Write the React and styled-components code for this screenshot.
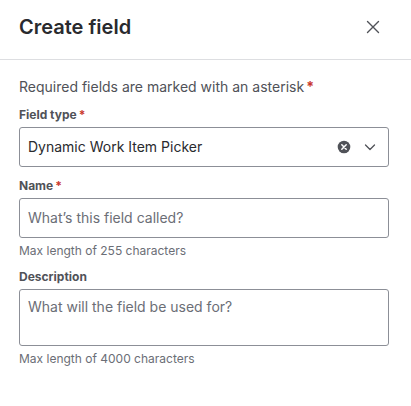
import React from 'react';
import styled, { createGlobalStyle } from 'styled-components';

const GlobalStyle = createGlobalStyle`
  html, body {
    margin: 0;
    padding: 0;
    background: #ffffff;
  }
  body {
    font-family: Inter, "Noto Sans", sans-serif;
    -webkit-font-smoothing: antialiased;
  }
  * {
    box-sizing: border-box;
  }
`;

const Modal = styled.div`
  width: 411px;
  height: 406px;
  background: #ffffff;
  display: flex;
  flex-direction: column;
`;

const Header = styled.header`
  display: flex;
  align-items: center;
  justify-content: space-between;
  height: 60px;
  padding: 0 26px 6px 19px;
  border-bottom: 1px solid #dddee1;
`;

const Title = styled.h1`
  margin: 0;
  font-size: 20px;
  line-height: 24px;
  font-weight: 600;
  color: #292a2e;
`;

const CloseButton = styled.button`
  display: flex;
  align-items: center;
  justify-content: center;
  width: 24px;
  height: 24px;
  padding: 0;
  border: 0;
  background: transparent;
  color: #505258;
  cursor: pointer;
`;

const Body = styled.div`
  padding: 17px 22px 0 19px;
  display: flex;
  flex-direction: column;
`;

const Intro = styled.p`
  margin: 0;
  font-size: 14px;
  line-height: 20px;
  color: #505258;
`;

const Asterisk = styled.span`
  color: #c9372c;
  font-weight: 700;
  margin-left: 2px;
`;

const Field = styled.div`
  display: flex;
  flex-direction: column;
  margin-top: ${(p) => p.$gap}px;
`;

const Label = styled.label`
  font-size: 12px;
  line-height: 16px;
  font-weight: 650;
  color: #505258;
  margin-bottom: 4px;
`;

const Box = styled.div`
  display: flex;
  align-items: ${(p) => (p.$multi ? 'flex-start' : 'center')};
  height: ${(p) => p.$height}px;
  padding: ${(p) => (p.$multi ? '7px 8px' : '0 8px')};
  border: 1px solid #8c8f97;
  border-radius: 3px;
  font-size: 14px;
  line-height: 20px;
`;

const Value = styled.span`
  flex: 1;
  color: #292a2e;
`;

const Placeholder = styled.span`
  flex: 1;
  color: #6b6e76;
`;

const Icons = styled.div`
  display: flex;
  align-items: center;
  gap: 12px;
  padding-right: 3px;
`;

const Help = styled.div`
  margin-top: 5px;
  font-size: 12px;
  line-height: 16px;
  color: #6b6e76;
`;

const CloseIcon = () => (
  <svg width="16" height="16" viewBox="0 0 16 16" fill="none">
    <path d="M2.5 2.5 L13.5 13.5 M13.5 2.5 L2.5 13.5" stroke="currentColor" strokeWidth="1.4" strokeLinecap="round" />
  </svg>
);

const ClearIcon = () => (
  <svg width="14" height="14" viewBox="0 0 14 14">
    <circle cx="7" cy="7" r="6.3" fill="#505258" />
    <path d="M4.8 4.8 L9.2 9.2 M9.2 4.8 L4.8 9.2" stroke="#ffffff" strokeWidth="1.5" strokeLinecap="round" />
  </svg>
);

const ChevronIcon = () => (
  <svg width="14" height="14" viewBox="0 0 14 14" fill="none">
    <path d="M2.5 5 L7 9.5 L11.5 5" stroke="#505258" strokeWidth="1.3" strokeLinecap="round" strokeLinejoin="round" />
  </svg>
);

export default function App() {
  return (
    <>
      <GlobalStyle />
      <Modal>
        <Header>
          <Title>Create field</Title>
          <CloseButton aria-label="Close">
            <CloseIcon />
          </CloseButton>
        </Header>
        <Body>
          <Intro>
            Required fields are marked with an asterisk<Asterisk>*</Asterisk>
          </Intro>

          <Field $gap={10}>
            <Label>
              Field type<Asterisk>*</Asterisk>
            </Label>
            <Box $height={40}>
              <Value>Dynamic Work Item Picker</Value>
              <Icons>
                <ClearIcon />
                <ChevronIcon />
              </Icons>
            </Box>
          </Field>

          <Field $gap={11}>
            <Label>
              Name<Asterisk>*</Asterisk>
            </Label>
            <Box $height={40}>
              <Placeholder>What’s this field called?</Placeholder>
            </Box>
            <Help>Max length of 255 characters</Help>
          </Field>

          <Field $gap={10}>
            <Label>Description</Label>
            <Box $height={57} $multi>
              <Placeholder>What will the field be used for?</Placeholder>
            </Box>
            <Help>Max length of 4000 characters</Help>
          </Field>
        </Body>
      </Modal>
    </>
  );
}
